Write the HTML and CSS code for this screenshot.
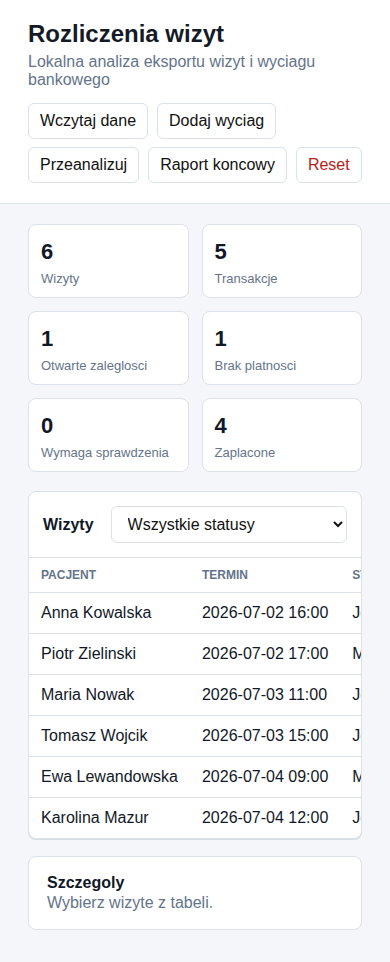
FILE: index.html
```html
<!DOCTYPE html>
<html lang="pl">
<head>
    <meta charset="UTF-8">
    <meta name="viewport" content="width=device-width, initial-scale=1.0">
    <title>Rozliczenia wizyt</title>
    <link rel="stylesheet" href="styles.css">
</head>
<body>
    <header class="top">
        <h1 class="title">Rozliczenia wizyt</h1>
        <p class="subtitle">Lokalna analiza eksportu wizyt i wyciagu bankowego</p>
        <div class="actions">
            <button class="btn">Wczytaj dane</button>
            <button class="btn">Dodaj wyciag</button>
            <button class="btn">Przeanalizuj</button>
            <button class="btn">Raport koncowy</button>
            <button class="btn btn-danger">Reset</button>
        </div>
    </header>

    <main class="content">
        <!-- Summary -->
        <section class="stats">
            <div class="stat"><div class="stat-value">6</div><div class="stat-label">Wizyty</div></div>
            <div class="stat"><div class="stat-value">5</div><div class="stat-label">Transakcje</div></div>
            <div class="stat"><div class="stat-value">1</div><div class="stat-label">Otwarte zaleglosci</div></div>
            <div class="stat"><div class="stat-value">1</div><div class="stat-label">Brak platnosci</div></div>
            <div class="stat"><div class="stat-value">0</div><div class="stat-label">Wymaga sprawdzenia</div></div>
            <div class="stat"><div class="stat-value">4</div><div class="stat-label">Zaplacone</div></div>
        </section>

        <!-- Visits table -->
        <section class="card visits">
            <div class="visits-head">
                <h2 class="card-title">Wizyty</h2>
                <select class="filter">
                    <option>Wszystkie statusy</option>
                    <option>Zaplacone</option>
                    <option>Brak platnosci</option>
                    <option>Wymaga sprawdzenia</option>
                </select>
            </div>
            <div class="table-wrap">
                <table class="table">
                    <thead>
                        <tr><th>Pacjent</th><th>Termin</th><th>Status</th><th>Kwota</th></tr>
                    </thead>
                    <tbody>
                        <tr><td>Anna Kowalska</td><td>2026-07-02 16:00</td><td>Jest platnosc</td><td>250,00 zl</td></tr>
                        <tr><td>Piotr Zielinski</td><td>2026-07-02 17:00</td><td>Milczy bank</td><td>180,00 zl</td></tr>
                        <tr><td>Maria Nowak</td><td>2026-07-03 11:00</td><td>Jest platnosc</td><td>200,00 zl</td></tr>
                        <tr><td>Tomasz Wojcik</td><td>2026-07-03 15:00</td><td>Jest platnosc</td><td>250,00 zl</td></tr>
                        <tr><td>Ewa Lewandowska</td><td>2026-07-04 09:00</td><td>Milczy bank</td><td>180,00 zl</td></tr>
                        <tr><td>Karolina Mazur</td><td>2026-07-04 12:00</td><td>Jest platnosc</td><td>200,00 zl</td></tr>
                    </tbody>
                </table>
            </div>
        </section>

        <!-- Details -->
        <section class="card details">
            <h2 class="card-title">Szczegoly</h2>
            <p class="muted">Wybierz wizyte z tabeli.</p>
        </section>
    </main>
</body>
</html>
```

FILE: styles.css
```css
* {
    box-sizing: border-box;
}
body {
    margin: 0;
    background: #f4f6f9;
    color: #111827;
    font-family: "Liberation Sans", Arial, sans-serif;
    font-size: 16px;
}
.top {
    background: #fff;
    border-bottom: 1px solid #dde3ea;
    padding: 20px 28px 20px;
}
.title {
    margin: 0;
    font-size: 24px;
    line-height: 28px;
    color: #151b26;
}
.subtitle {
    margin: 5px 0 0;
    color: #64748b;
    font-size: 16px;
    line-height: 18px;
}
.actions {
    display: flex;
    flex-wrap: wrap;
    gap: 8px 9px;
    margin-top: 14px;
}
.btn {
    height: 36px;
    padding: 0 11px;
    background: #fff;
    border: 1px solid #d9e1e9;
    border-radius: 6px;
    font-family: inherit;
    font-size: 16px;
    color: #111;
    cursor: pointer;
}
.btn-danger {
    color: #b42318;
}
.content {
    padding: 20px 28px 32px;
}
.stats {
    display: grid;
    grid-template-columns: 1fr 1fr;
    gap: 13px 13px;
}
.stat {
    background: #fff;
    border: 1px solid #dbe2ea;
    border-radius: 8px;
    padding: 14px 12px 12px;
    height: 74px;
}
.stat-value {
    font-size: 22px;
    font-weight: bold;
    line-height: 26px;
}
.stat-label {
    margin-top: 6px;
    font-size: 13px;
    color: #64748b;
}
.card {
    background: #fff;
    border: 1px solid #dbe2ea;
    border-radius: 8px;
}
.card-title {
    margin: 0;
    font-size: 16px;
    font-weight: bold;
}
.visits {
    margin-top: 19px;
    overflow: hidden;
    box-shadow: 0 1px 0 #d5dce4;
}
.visits-head {
    display: flex;
    align-items: center;
    gap: 17px;
    padding: 14px;
    border-bottom: 1px solid #dbe2ea;
}
.filter {
    flex: 1;
    height: 37px;
    padding: 0 12px;
    background: #fff;
    border: 1px solid #d9e1e9;
    border-radius: 6px;
    font-family: inherit;
    font-size: 16px;
    color: #111;
}
.table-wrap {
    overflow: hidden;
}
.table {
    border-collapse: collapse;
    white-space: nowrap;
}
.table th {
    text-align: left;
    font-size: 12px;
    text-transform: uppercase;
    color: #64748b;
    padding: 10px 12px;
    line-height: 14px;
    border-bottom: 1px solid #dbe2ea;
}
.table td {
    padding: 11px 12px;
    line-height: 18px;
    border-bottom: 1px solid #dbe2ea;
}
.table tbody tr:last-child td {
    border-bottom: none;
}
.details {
    margin-top: 17px;
    padding: 17px 18px;
}
.muted {
    margin: 2px 0 0;
    color: #64748b;
}
```
